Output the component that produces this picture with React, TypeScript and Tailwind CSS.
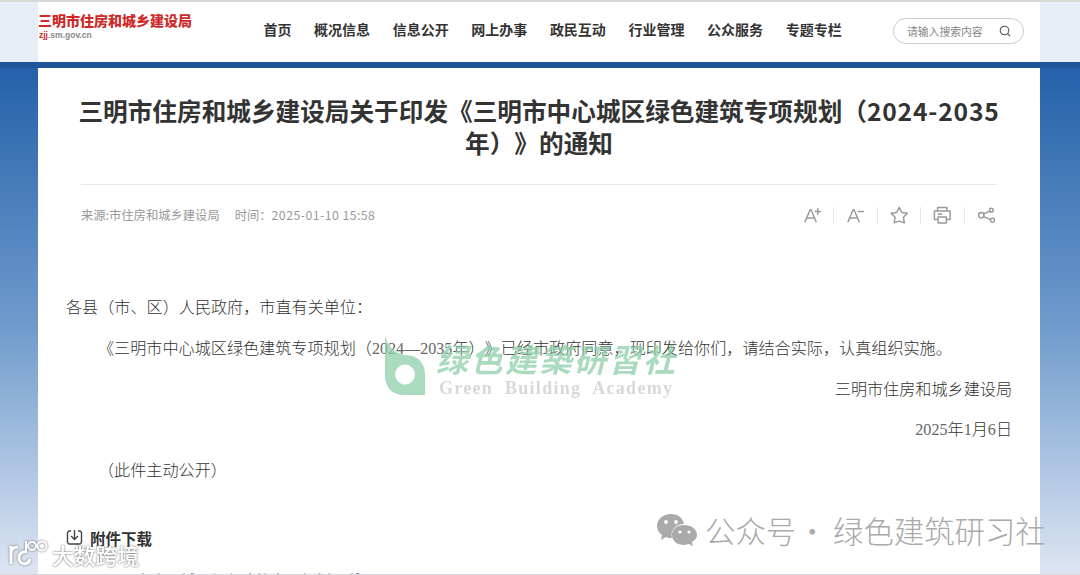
import { Fragment } from 'react'

const NAV_ITEMS = [
  '首页',
  '概况信息',
  '信息公开',
  '网上办事',
  '政民互动',
  '行业管理',
  '公众服务',
  '专题专栏',
]

const TOOLS = [
  {
    name: 'larger',
    paths: ['M2 17.500 7.700 4h1l5.700 13.500', 'M4 13h8.500', 'M12.500 6h7M16 2.500v7'],
  },
  {
    name: 'smaller',
    paths: ['M2 17.500 7.700 4h1l5.700 13.500', 'M4 13h8.500', 'M12.500 6h7'],
  },
  {
    name: 'favourite',
    paths: ['m10 1.500 2.800 5.500 6 .9-4.300 4.300 1 6-5.500-1.800-5.500 1.800 1-6L1.200 7.900l6-.9z'],
  },
  {
    name: 'print',
    paths: [
      'M5 5.500V1.500h10v4',
      'M5 14.500H1.500v-9h17v9H15',
      'M5.500 12h9v6.500h-9z',
      'M5 8.700h5',
    ],
  },
  {
    name: 'share',
    paths: [
      'M7.500 10a2.900 2.900 0 1 1-5.800 0 2.900 2.900 0 0 1 5.800 0z',
      'M17.500 4.500a2 2 0 1 1-4 0 2 2 0 0 1 4 0z',
      'M19 15.500a2.200 2.200 0 1 1-4.400 0 2.200 2.200 0 0 1 4.400 0z',
      'm7.300 8.500 6.500-3M7.300 11.500l7.400 3.300',
    ],
  },
]

function SiteHeader() {
  return (
    <div className="flex h-[60px] shrink-0 border-r-[40px] border-l-[38px] border-[#e7eef8] bg-white">
      <div className="w-[225.500px] shrink-0 pt-[8px]">
        <div className="text-[14px] leading-[20px] font-black whitespace-nowrap text-[#cf2a2a]">
          三明市住房和城乡建设局
        </div>
        <div className="pl-px font-['Liberation_Sans',sans-serif] text-[8.500px] leading-[11px] font-bold text-[#888]">
          <span className="text-[#cf2a2a]">zjj</span>.sm.gov.cn
        </div>
      </div>
      <nav className="flex shrink-0 gap-[22.600px] pt-[17px] text-[14px] leading-[20px] font-bold whitespace-nowrap text-[#333]">
        {NAV_ITEMS.map((item) => (
          <span key={item}>{item}</span>
        ))}
      </nav>
      <div className="mt-[16px] mr-[16px] ml-auto flex h-[26px] w-[131px] items-center justify-between rounded-full border border-[#ccc] pr-[12px] pl-[13px] text-[10.800px] text-[#888]">
        <span>请输入搜索内容</span>
        <svg className="size-[12px]" viewBox="0 0 12 12" fill="none" stroke="#555" strokeWidth="1.100">
          <circle cx="5.500" cy="5.500" r="4.300" />
          <path d="m8.600 8.600 2.600 2.600" />
        </svg>
      </div>
    </div>
  )
}

function ArticleTools() {
  return (
    <div className="mr-[2px] flex items-center">
      {TOOLS.map((tool, i) => (
        <Fragment key={tool.name}>
          {i > 0 && <span className="mr-[12px] ml-[12px] h-[17px] w-px bg-[#e8e8e8]" />}
          <svg
            className="size-[18.500px]"
            viewBox="0 0 20 20"
            fill="none"
            stroke="#999"
            strokeWidth="1.600"
            strokeLinejoin="round"
          >
            {tool.paths.map((d) => (
              <path key={d} d={d} />
            ))}
          </svg>
        </Fragment>
      ))}
    </div>
  )
}

function Article() {
  return (
    <main className="min-w-0 flex-1 bg-white">
      <h1 className="flex flex-col items-center pt-[26px] text-[24.650px] leading-[32px] font-bold whitespace-nowrap text-[#333]">
        <span>
          三明市住房和城乡建设局关于印发《三明市中心城区绿色建筑专项规划（
          <span className="tracking-[0.800px]">2024-2035</span>
        </span>
        <span>年）》的通知</span>
      </h1>
      <div className="mx-[43px] mt-[26px] flex h-[61px] items-center justify-between border-t border-[#e8e8e8]">
        <div className="flex gap-[15px] text-[12.300px] text-[#999]">
          <span>来源:市住房和城乡建设局</span>
          <span>
            时间：<span className="tracking-[0.450px]">2025-01-10 15:58</span>
          </span>
        </div>
        <ArticleTools />
      </div>
      <div className="mt-[43px] px-[28px] font-['Liberation_Serif','Noto_Sans_CJK_SC',serif] text-[16.120px] leading-[40.800px] font-light whitespace-nowrap text-[#333]">
        <p>各县（市、区）人民政府，市直有关单位：</p>
        <p className="indent-[32px]">
          《三明市中心城区绿色建筑专项规划（<span className="text-[#666]">2024—2035</span>
          年）》已经市政府同意，现印发给你们，请结合实际，认真组织实施。
        </p>
        <p className="text-right">三明市住房和城乡建设局</p>
        <p className="text-right">
          <span className="text-[#666]">2025</span>年<span className="text-[#666]">1</span>月
          <span className="text-[#666]">6</span>日
        </p>
        <p className="indent-[32px]">（此件主动公开）</p>
      </div>
      <div className="mt-[36px] flex items-center gap-[7px] pl-[28px] text-[15.500px] leading-[20px] font-bold text-[#333]">
        <svg className="size-[17px]" viewBox="0 0 17 17" fill="none" stroke="#444" strokeWidth="1.400">
          <path d="M5 2H3L1.500 3.500v10L3 15h11l1.500-1.500v-10L14 2h-2M8.500 1v9M5 7l3.500 3.500L12 7" />
        </svg>
        附件下载
      </div>
      <div className="mt-[21px] pl-[68px] text-[15px] leading-[22px] text-[#6c8089]">
        三明市中心城区绿色建筑专项规划.pdf
      </div>
    </main>
  )
}

function AcademyMark() {
  return (
    <div className="absolute top-[332px] left-[384px] flex opacity-75">
      <svg className="h-[62px] w-[42px]" viewBox="0 0 42 62">
        <path
          fill="#8ecfaa"
          fillRule="evenodd"
          d="M1 1c2 9 6 14 13 18 3 1 6 2 9 2 11 1 18 8 18 19v21H20C8 61 1 53 1 42zM21 30.500a10 10 0 1 0 0 20 10 10 0 0 0 0-20z"
        />
      </svg>
      <div className="ml-[10px] whitespace-nowrap">
        <div className="mt-[3px] text-[32px] leading-[42px] font-bold tracking-[2.500px] text-[#8ecfaa] italic">
          绿色建築研習社
        </div>
        <div className="pl-[3px] font-['Liberation_Serif',serif] text-[18px] leading-[18px] font-bold tracking-[1.300px] text-[#ccc] [word-spacing:6px]">
          Green Building Academy
        </div>
      </div>
    </div>
  )
}

function WechatMark() {
  return (
    <div className="absolute top-[506px] left-[656px] flex items-center text-[#aaa]">
      <svg className="h-[34px] w-[42px]" viewBox="0 0 42 34" fill="#aaa">
        <path d="M15 1C7 1 1 6 1 13c0 4 2 7 5 9l-1 5 5-3c2 1 4 1 6 1-2-8 4-14 12-14C27 5 22 1 15 1z" />
        <path d="M28 12c-7 0-12 4-12 10s5 10 12 10l5-1 4 2-1-4c3-2 5-4 5-7 0-6-6-10-13-10z" />
        <g fill="white">
          <circle cx="10" cy="9" r="1.900" />
          <circle cx="20" cy="9" r="1.900" />
          <circle cx="24" cy="19" r="1.600" />
          <circle cx="33" cy="19" r="1.600" />
        </g>
      </svg>
      <span className="ml-[7px] text-[30.400px] leading-[44px] font-light whitespace-nowrap">
        公众号<span className="-mr-px -ml-[6px]"> · </span>绿色建筑研习社
      </span>
    </div>
  )
}

function SourceMark() {
  return (
    <div className="absolute top-[537px] left-[8px] flex text-white drop-shadow-[0_0_1px_#666]">
      <svg className="h-[28px] w-[42px]" viewBox="0 0 42 28" fill="none" stroke="white" strokeWidth="3">
        <path d="M3 7v18M3 14c0-4 3-6 7-6M22 20c-2 7-11 6-11-1 0-5 4-7 8-6" />
        <path d="M18 2v11" strokeWidth="2" />
        <circle cx="24" cy="7" r="4" strokeWidth="2" />
        <circle cx="34" cy="7" r="4.500" strokeWidth="2" />
      </svg>
      <span className="ml-[2px] text-[21.800px] leading-[32px] font-medium whitespace-nowrap">大数跨境</span>
    </div>
  )
}

export default function App() {
  return (
    <div className="relative flex h-[575px] w-[1080px] flex-col overflow-hidden border-t-2 border-b border-t-[#d9d9d9] border-b-[#d3d6da] bg-white font-['Noto_Sans_CJK_SC',sans-serif] [text-spacing-trim:space-all]">
      <SiteHeader />
      <div className="h-[6px] shrink-0 bg-[#1d5596]" />
      <div className="flex h-[507px] shrink-0 bg-linear-to-b from-[#2461aa] via-[#6d9acb] to-[#dfe6f3] pr-[40px] pl-[38px]">
        <Article />
      </div>
      <AcademyMark />
      <WechatMark />
      <SourceMark />
    </div>
  )
}
